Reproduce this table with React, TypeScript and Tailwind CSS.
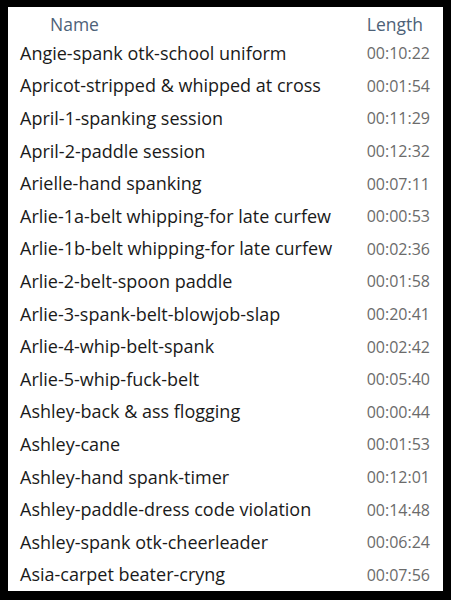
import React from 'react';

const rows: [string, string][] = [
  ['Angie-spank otk-school uniform', '00:10:22'],
  ['Apricot-stripped & whipped at cross', '00:01:54'],
  ['April-1-spanking session', '00:11:29'],
  ['April-2-paddle session', '00:12:32'],
  ['Arielle-hand spanking', '00:07:11'],
  ['Arlie-1a-belt whipping-for late curfew', '00:00:53'],
  ['Arlie-1b-belt whipping-for late curfew', '00:02:36'],
  ['Arlie-2-belt-spoon paddle', '00:01:58'],
  ['Arlie-3-spank-belt-blowjob-slap', '00:20:41'],
  ['Arlie-4-whip-belt-spank', '00:02:42'],
  ['Arlie-5-whip-fuck-belt', '00:05:40'],
  ['Ashley-back & ass flogging', '00:00:44'],
  ['Ashley-cane', '00:01:53'],
  ['Ashley-hand spank-timer', '00:12:01'],
  ['Ashley-paddle-dress code violation', '00:14:48'],
  ['Ashley-spank otk-cheerleader', '00:06:24'],
  ['Asia-carpet beater-cryng', '00:07:56'],
];

export default function App() {
  return (
    <div className="w-[451px] h-[600px] bg-black pt-[7px] pl-[8px] pr-[8px] pb-[9px]">
      <div
        className="h-full bg-white flex flex-col"
        style={{ fontFamily: '"Open Sans", "Noto Sans", sans-serif' }}
      >
        <div className="flex items-center justify-between h-[30px] pt-[5px] pl-[42px] pr-[20px] text-[17.5px] text-[#4d6178]">
          <span>Name</span>
          <span>Length</span>
        </div>
        {rows.map(([name, len], i) => (
          <div key={i} className="flex items-center justify-between h-[32.6px] pl-[12px] pr-[13px]">
            <span className="text-[18px] text-[#1a1a1a]">{name}</span>
            <span className="text-[16px] text-[#6b6b6b]">{len}</span>
          </div>
        ))}
      </div>
    </div>
  );
}
